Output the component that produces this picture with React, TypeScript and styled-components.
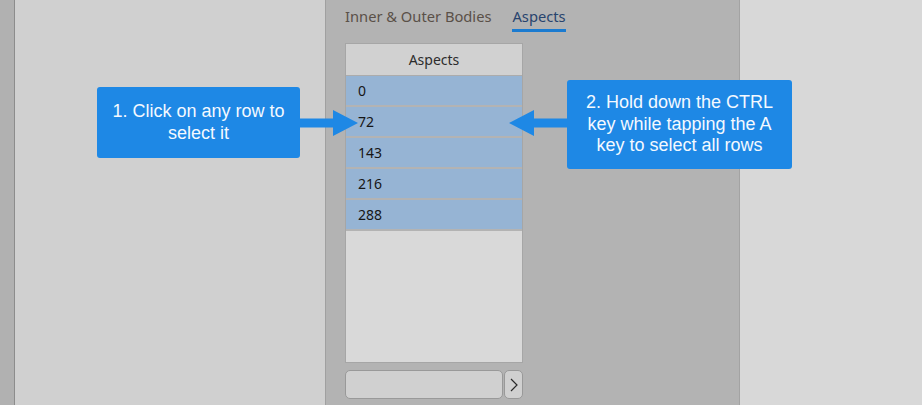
import React from 'react';
import styled, { createGlobalStyle } from 'styled-components';

const GlobalStyle = createGlobalStyle`
  html, body {
    margin: 0;
    padding: 0;
    width: 922px;
    height: 405px;
    overflow: hidden;
  }
  body {
    font-family: "Noto Sans", "Open Sans", sans-serif;
  }
`;

const StyledPage = styled.div`
  position: relative;
  width: 922px;
  height: 405px;
  display: flex;
  flex-direction: row;
  background-color: #d8d8d8;
`;

const StyledEdge = styled.div`
  width: 14px;
  background-color: #b1b1b1;
  border-right: 1px solid #8c8c8c;
`;

const StyledSidePanel = styled.div<{ width: number; shade: string }>`
  width: ${props => props.width}px;
  flex-shrink: 0;
  background-color: ${props => props.shade};
`;

const StyledMiddle = styled.div`
  width: 415px;
  flex-shrink: 0;
  background-color: #b3b3b3;
  border-left: 1px solid #a0a0a0;
  border-right: 1px solid #a3a3a3;
  padding: 0 0 0 19px;
  box-sizing: border-box;
  display: flex;
  flex-direction: column;
`;

const StyledTabs = styled.div`
  display: flex;
  flex-direction: row;
  gap: 21px;
  height: 43px;
  padding-top: 6px;
  box-sizing: border-box;
`;

const StyledTab = styled.div<{ active?: boolean }>`
  font-size: 14.7px;
  line-height: 21px;
  height: 23px;
  color: ${props => (props.active ? '#28446e' : '#5a5048')};
  border-bottom: 3px solid ${props => (props.active ? '#1b7bd0' : 'transparent')};
  box-sizing: content-box;
`;

const StyledGrid = styled.div`
  width: 178px;
  height: 320px;
  box-sizing: border-box;
  border: 1px solid #a6a6a6;
  background-color: #d9d9d9;
  display: flex;
  flex-direction: column;
`;

const StyledHeader = styled.div`
  height: 32px;
  flex-shrink: 0;
  background-color: #d1d1d1;
  border-bottom: 1px solid #acacac;
  box-sizing: border-box;
  display: flex;
  align-items: center;
  justify-content: center;
  font-size: 14px;
  color: #2c2c2c;
`;

const StyledRow = styled.div`
  height: 31px;
  flex-shrink: 0;
  box-sizing: border-box;
  background-color: #96b4d4;
  border-bottom: 2px solid #b3b3b3;
  padding-left: 12px;
  display: flex;
  align-items: center;
  font-size: 14px;
  color: #161616;
`;

const StyledFooter = styled.div`
  display: flex;
  flex-direction: row;
  gap: 1px;
  margin-top: 7px;
`;

const StyledInput = styled.div`
  width: 158px;
  height: 29px;
  box-sizing: border-box;
  background-color: #d0d0d0;
  border: 1px solid #999999;
  border-radius: 5px;
`;

const StyledNextButton = styled.div`
  width: 19px;
  height: 29px;
  box-sizing: border-box;
  background-color: #d0d0d0;
  border: 1px solid #999999;
  border-radius: 5px;
  display: flex;
  align-items: center;
  justify-content: center;
`;

const StyledCallout = styled.div<{ left: number; top: number; width: number; height: number }>`
  position: absolute;
  left: ${props => props.left}px;
  top: ${props => props.top}px;
  width: ${props => props.width}px;
  height: ${props => props.height}px;
  background-color: #1e88e5;
  border-radius: 3px;
  display: flex;
  align-items: center;
  justify-content: center;
  text-align: center;
  font-family: "Liberation Sans", Arial, sans-serif;
  font-size: 18px;
  line-height: 21.5px;
  color: #f4f9ff;
  padding: 0 6px;
  box-sizing: border-box;
`;

const StyledArrow = styled.svg<{ left: number; top: number }>`
  position: absolute;
  left: ${props => props.left}px;
  top: ${props => props.top}px;
`;

interface ArrowProps {
  left: number;
  top: number;
  pointing: 'left' | 'right';
}

const Arrow: React.FC<ArrowProps> = ({ left, top, pointing }) => {
  // 58 x 26 box, shaft 9px tall, head 26px tall and 25px long
  const d = pointing === 'right'
    ? 'M0 8.5 H33 V0 L58 13 L33 26 V17.5 H0 Z'
    : 'M58 8.5 H25 V0 L0 13 L25 26 V17.5 H58 Z';
  return (
    <StyledArrow left={left} top={top} width="58" height="26" viewBox="0 0 58 26">
      <path d={d} fill="#1e88e5" />
    </StyledArrow>
  );
};

const aspects = ['0', '72', '143', '216', '288'];

export default function App() {
  return (
    <>
      <GlobalStyle />
      <StyledPage>
        <StyledEdge />
        <StyledSidePanel width={310} shade="#d0d0d0" />
        <StyledMiddle>
          <StyledTabs>
            <StyledTab>Inner &amp; Outer Bodies</StyledTab>
            <StyledTab active>Aspects</StyledTab>
          </StyledTabs>
          <StyledGrid>
            <StyledHeader>Aspects</StyledHeader>
            {aspects.map(value => (
              <StyledRow key={value}>{value}</StyledRow>
            ))}
          </StyledGrid>
          <StyledFooter>
            <StyledInput />
            <StyledNextButton>
              <svg width="8" height="14" viewBox="0 0 8 14">
                <path d="M1 1 L7 7 L1 13" fill="none" stroke="#2a2a2a" strokeWidth="1.2" />
              </svg>
            </StyledNextButton>
          </StyledFooter>
        </StyledMiddle>
        <StyledSidePanel width={182} shade="#d8d8d8" />

        <StyledCallout left={97} top={87} width={203} height={71}>
          1. Click on any row to<br />select it
        </StyledCallout>
        <Arrow left={300} top={110} pointing="right" />

        <StyledCallout left={567} top={80} width={225} height={89}>
          2. Hold down the CTRL<br />key while tapping the A<br />key to select all rows
        </StyledCallout>
        <Arrow left={509} top={110} pointing="left" />
      </StyledPage>
    </>
  );
}
